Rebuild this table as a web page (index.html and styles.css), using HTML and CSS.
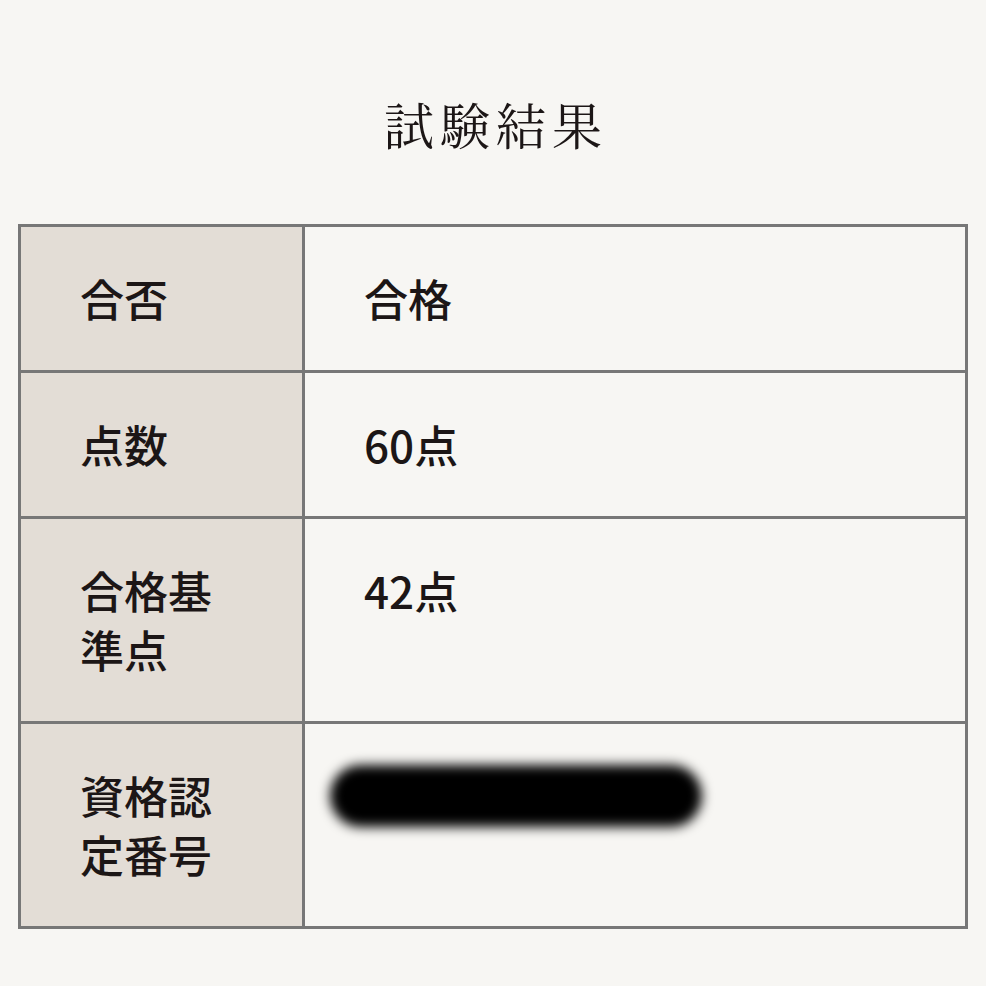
FILE: index.html
```html
<!DOCTYPE html>
<html lang="ja">
<head>
<meta charset="utf-8">
<link rel="stylesheet" href="styles.css">
</head>
<body>
<main class="page">
  <h1 class="title">試験結果</h1>
  <table class="result">
    <tr>
      <th class="label">合否</th>
      <td class="value">合格</td>
    </tr>
    <tr>
      <th class="label">点数</th>
      <td class="value">60点</td>
    </tr>
    <tr>
      <th class="label">合格基<br>準点</th>
      <td class="value">42点</td>
    </tr>
    <tr>
      <th class="label">資格認<br>定番号</th>
      <td class="value"><div class="redacted"></div></td>
    </tr>
  </table>
</main>
</body>
</html>
```
FILE: styles.css
```css
html, body {
  margin: 0;
  padding: 0;
  background: #f7f6f3;
}
.page {
  padding: 0 18px;
  font-family: "Noto Sans CJK JP", "Noto Sans", sans-serif;
  color: #1c1616;
}
.title {
  margin: 0 0 68px;
  padding: 90px 0 0 6px;
  text-align: center;
  font-family: "Noto Serif CJK JP", "Noto Sans CJK JP", serif;
  font-weight: 400;
  font-size: 50px;
  line-height: 66px;
  letter-spacing: 6px;
}
.result {
  width: 950px;
  border-collapse: collapse;
  border: 3px solid #777777;
  table-layout: fixed;
}
.result th, .result td {
  border: 3px solid #777777;
  padding: 42px 20px 42px 59px;
  font-size: 44px;
  line-height: 59px;
  font-weight: 500;
  text-align: left;
  vertical-align: top;
}
.label {
  width: 284px;
  background: #e3ddd6;
  box-sizing: border-box;
}
.value {
  background: #f7f6f3;
}
.redacted {
  width: 372px;
  height: 62px;
  margin: -1px 0 0 -34px;
  border-radius: 31px;
  background: #000;
  filter: blur(6px);
}
```
